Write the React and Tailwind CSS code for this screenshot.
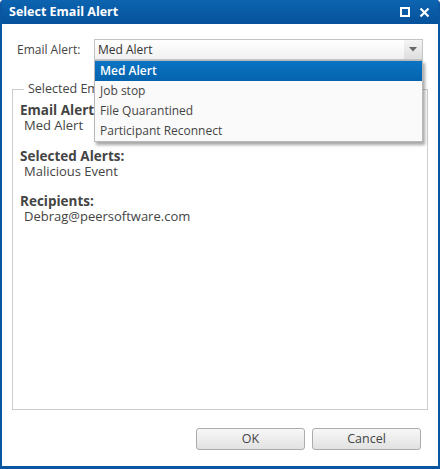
import React from 'react';

const font = { fontFamily: '"Open Sans", "Noto Sans", sans-serif' };

export default function App() {
  const options = ['Med Alert', 'Job stop', 'File Quarantined', 'Participant Reconnect'];

  return (
    <div className="w-[440px] h-[469px] bg-white" style={font}>
      <div className="flex flex-col w-full h-full rounded-t-[4px] bg-[#0b56a0] px-[2px] pb-[3px]">
        {/* Title bar */}
        <div className="flex items-center justify-between h-[24px] pl-[7px] pr-[8px] bg-gradient-to-b from-[#0d64b0] to-[#06519b]">
          <span className="text-[12.5px] font-bold text-white leading-none">Select Email Alert</span>
          <div className="flex items-center gap-[9px] text-white">
            <span className="block w-[10px] h-[10px] border-[2px] border-white" />
            <svg width="11" height="11" viewBox="0 0 11 11">
              <path d="M1.5 1.5 L9.5 9.5 M9.5 1.5 L1.5 9.5" stroke="white" strokeWidth="2.2" />
            </svg>
          </div>
        </div>

        {/* Body */}
        <div className="relative flex flex-col flex-1 bg-white">
          <div className="flex items-center pt-[15px] pl-[15px] pr-[15px]">
            <span className="text-[12px] text-[#444] w-[77px]">Email Alert:</span>
            <div className="relative flex-1">
              <div className="flex items-center h-[21px] border border-[#c4c4c4] bg-gradient-to-b from-white to-[#f0f0f0]">
                <span className="flex-1 pl-[3px] text-[12px] text-[#333]">Med Alert</span>
                <div className="flex items-center justify-center w-[18px] h-full bg-gradient-to-b from-[#f4f4f4] to-[#dedede]">
                  <svg width="8" height="5" viewBox="0 0 8 5">
                    <path d="M0 0 H8 L4 4.5 Z" fill="#666" />
                  </svg>
                </div>
              </div>

              {/* Dropdown list */}
              <div className="absolute left-0 right-0 top-[21px] z-10 bg-[#fafafa] border border-[#b9b9b9] shadow-[2px_3px_3px_rgba(0,0,0,0.35)]">
                {options.map((o, i) => (
                  <div
                    key={o}
                    className={`flex items-center h-[20px] pl-[5px] text-[12px] ${
                      i === 0 ? 'bg-gradient-to-b from-[#0a74c4] to-[#0563ad] text-white font-semibold' : 'text-[#444]'
                    }`}
                  >
                    {o}
                  </div>
                ))}
              </div>
            </div>
          </div>

          {/* Fieldset */}
          <fieldset className="flex-1 ml-[10px] mr-[10px] mt-[20px] border border-[#cccccc] px-[7px] pt-[4px] min-h-0">
            <legend className="ml-[4px] px-[4px] text-[12.5px] text-[#444]">Selected Email Alert</legend>
            <div className="flex flex-col text-[13px] leading-[15px] text-[#444]">
              <span className="font-bold text-[13.5px]">Email Alert:</span>
              <span className="pl-[4px]">Med Alert</span>
              <span className="mt-[16px] font-bold text-[13.5px]">Selected Alerts:</span>
              <span className="pl-[4px]">Malicious Event</span>
              <span className="mt-[15px] font-bold text-[13.5px]">Recipients:</span>
              <span className="pl-[4px]">Debrag@peersoftware.com</span>
            </div>
          </fieldset>

          {/* Buttons */}
          <div className="flex justify-end gap-[7px] pr-[17px] pt-[18px] pb-[16px]">
            {['OK', 'Cancel'].map((b) => (
              <button
                key={b}
                className="w-[109px] h-[22px] rounded-[3px] border border-[#acacac] bg-gradient-to-b from-[#f7f7f7] to-[#e2e2e2] text-[12.5px] text-[#444]"
              >
                {b}
              </button>
            ))}
          </div>
        </div>
      </div>
    </div>
  );
}
